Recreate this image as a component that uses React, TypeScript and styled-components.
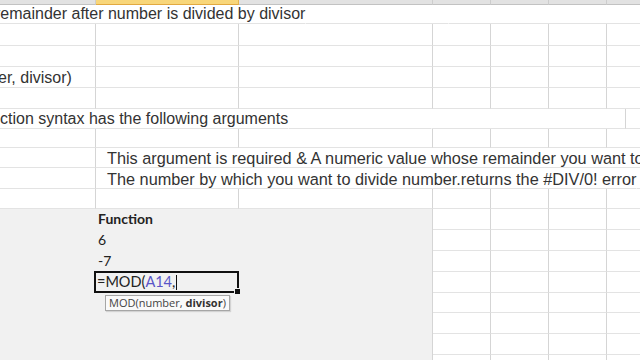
import React from "react";
import styled, { createGlobalStyle } from "styled-components";

// column widths include the 1px grid line on the right
const COLS = [96, 143, 194, 58, 58, 58, 40];

interface TopRowData {
  h: number;
  col?: number;
  text?: string;
  shift?: number;
  hide?: number;
  size?: number;
}

const TOP_ROWS: TopRowData[] = [
  { h: 19, col: 0, text: "remainder after number is divided by divisor", shift: -5, hide: 2 },
  { h: 22 },
  { h: 21 },
  { h: 21, col: 0, text: "er, divisor)", shift: -2 },
  { h: 21 },
  { h: 20, col: 0, text: "ction syntax has the following arguments", shift: 0, hide: 2 },
  { h: 19 },
  {
    h: 20,
    col: 1,
    text: "This argument is required & A numeric value whose remainder you want to",
    shift: 11,
    hide: 6,
    size: 16.3,
  },
  {
    h: 21,
    col: 1,
    text: "The number by which you want to divide number.returns the #DIV/0! error",
    shift: 11,
    hide: 6,
    size: 16.3,
  },
  { h: 20 },
];

const LOW_ROWS = [21, 21, 21, 21, 20, 21, 21, 12];

const GlobalStyle = createGlobalStyle`
  html, body {
    margin: 0;
    padding: 0;
    background: #fff;
    overflow: hidden;
  }
`;

const Screen = styled.div`
  width: 640px;
  height: 360px;
  overflow: hidden;
  background: #fff;
  font-family: "Liberation Sans", Arial, sans-serif;
`;

const HeaderBar = styled.div`
  display: flex;
  height: 5px;
`;

const HeaderCell = styled.div<{ $w: number; $active?: boolean }>`
  flex: 0 0 ${({ $w }) => $w}px;
  box-sizing: border-box;
  height: 5px;
  background: ${({ $active }) => ($active ? "#f8d67a" : "#e2e2e2")};
  border-right: 1px solid ${({ $active }) => ($active ? "#e6b552" : "#cdcdcd")};
  border-bottom: 1px solid ${({ $active }) => ($active ? "#e2a940" : "#c2c2c2")};
`;

const Row = styled.div<{ $h: number }>`
  display: flex;
  height: ${({ $h }) => $h}px;
`;

const Cell = styled.div<{ $w: number; $open?: boolean }>`
  flex: 0 0 ${({ $w }) => $w}px;
  box-sizing: border-box;
  display: flex;
  align-items: flex-end;
  border-bottom: 1px solid #e3e3e3;
  border-right: 1px solid ${({ $open }) => ($open ? "transparent" : "#d5d5d5")};
`;

const CellText = styled.span<{ $shift: number; $size: number }>`
  margin-left: ${({ $shift }) => $shift}px;
  white-space: nowrap;
  font-size: ${({ $size }) => $size}px;
  line-height: 18px;
  color: #333;
`;

const Lower = styled.div`
  display: flex;
`;

const Overlay = styled.div`
  flex: 0 0 433px;
  box-sizing: border-box;
  height: 160px;
  background: #f1f1f1;
  border-right: 1px solid #d5d5d5;
  font-family: Lato, "Open Sans", sans-serif;
  font-size: 14px;
  color: #222;
`;

const PanelRow = styled.div`
  display: flex;
  align-items: flex-end;
  height: 21px;
  padding-left: 98px;
  box-sizing: border-box;
  padding-bottom: 2px;
`;

const PanelText = styled.span<{ $bold?: boolean }>`
  line-height: 18px;
  font-weight: ${({ $bold }) => ($bold ? 700 : 400)};
`;

const EditRow = styled.div`
  display: flex;
  height: 21px;
  padding-left: 94px;
`;

const ActiveCell = styled.div`
  position: relative;
  box-sizing: border-box;
  width: 145px;
  height: 22px;
  margin-top: -1px;
  border: 2px solid #111;
  display: flex;
  align-items: center;
  padding-left: 1px;
  line-height: 18px;
  font-size: 14.5px;

  &::after {
    content: "";
    position: absolute;
    right: -4px;
    bottom: -4px;
    width: 5px;
    height: 5px;
    background: #111;
    border: 1px solid #f1f1f1;
  }
`;

const Ref = styled.span`
  color: #5a55c8;
`;

const Caret = styled.span`
  display: inline-block;
  width: 1px;
  height: 15px;
  background: #111;
  margin-left: 1px;
`;

const Tip = styled.div`
  position: absolute;
  left: 9px;
  top: 22px;
  padding: 0 3px;
  background: #fafafa;
  border: 1px solid #a6a6a6;
  box-shadow: 1px 1px 1px rgba(0, 0, 0, 0.12);
  font-family: "Open Sans", sans-serif;
  font-size: 11px;
  line-height: 14px;
  color: #444;
  white-space: nowrap;

  b {
    font-weight: 700;
    color: #333;
  }
`;

const RightGrid = styled.div`
  display: flex;
  flex-direction: column;
`;

function TopRow({ row }: { row: TopRowData }) {
  const hideFrom = row.col ?? 0;
  const hideTo = hideFrom + (row.hide ?? 0);
  return (
    <Row $h={row.h}>
      {COLS.map((w, i) => (
        <Cell key={i} $w={w} $open={i >= hideFrom && i < hideTo}>
          {row.text && row.col === i && (
            <CellText $shift={row.shift ?? 0} $size={row.size ?? 16}>
              {row.text}
            </CellText>
          )}
        </Cell>
      ))}
    </Row>
  );
}

export default function App() {
  return (
    <Screen>
      <GlobalStyle />
      <HeaderBar>
        {COLS.map((w, i) => (
          <HeaderCell key={i} $w={w} $active={i === 1} />
        ))}
      </HeaderBar>
      {TOP_ROWS.map((row, i) => (
        <TopRow key={i} row={row} />
      ))}
      <Lower>
        <Overlay>
          <PanelRow>
            <PanelText $bold>Function</PanelText>
          </PanelRow>
          <PanelRow>
            <PanelText>6</PanelText>
          </PanelRow>
          <PanelRow>
            <PanelText>-7</PanelText>
          </PanelRow>
          <EditRow>
            <ActiveCell>
              <span>
                =MOD(<Ref>A14</Ref>,
              </span>
              <Caret />
              <Tip>
                MOD(number, <b>divisor</b>)
              </Tip>
            </ActiveCell>
          </EditRow>
        </Overlay>
        <RightGrid>
          {LOW_ROWS.map((h, r) => (
            <Row key={r} $h={h}>
              {COLS.slice(3).map((w, i) => (
                <Cell key={i} $w={w} />
              ))}
            </Row>
          ))}
        </RightGrid>
      </Lower>
    </Screen>
  );
}
